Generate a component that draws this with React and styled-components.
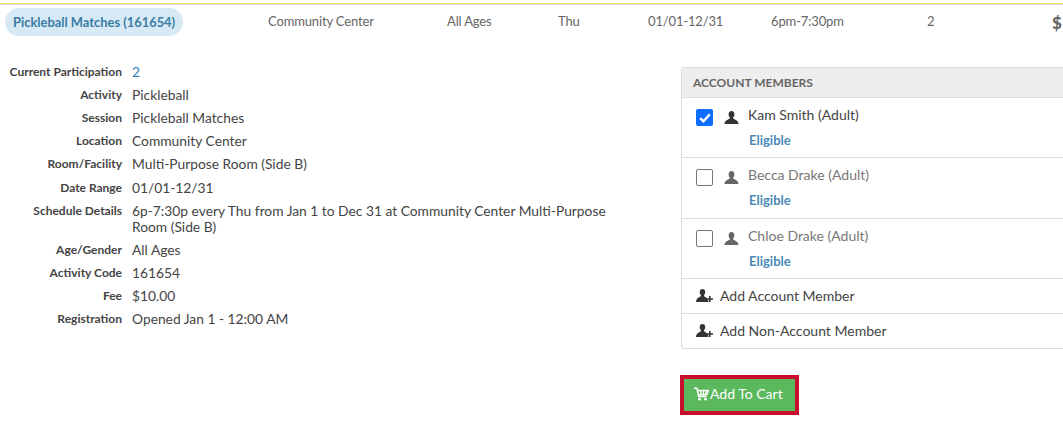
import React from "react";
import styled, { createGlobalStyle } from "styled-components";

const GlobalStyle = createGlobalStyle`
  html, body {
    margin: 0;
    padding: 0;
    background: #fff;
    overflow: hidden;
  }
  body {
    font-family: Lato, "Liberation Sans", sans-serif;
    color: #444;
  }
`;

const Page = styled.div`
  width: 1063px;
  height: 444px;
  overflow: hidden;
  padding-top: 3px;
  box-sizing: border-box;
`;

const TopRule = styled.div`
  height: 1px;
  background: #f5e26b;
  border-bottom: 1px solid #d9d9d9;
`;

// Summary row of the activity
const SummaryRow = styled.div`
  display: grid;
  grid-template-columns: 263px 179px 111px 90px 123px 156px 125px 1fr;
  align-items: center;
  height: 28px;
  margin-top: 3px;
  padding-left: 5px;
  font-size: 13px;
  letter-spacing: -0.15px;
  color: #666;
  white-space: nowrap;
`;

const Cell = styled.span`
  padding-bottom: 2px;
`;

const Pill = styled.span`
  justify-self: start;
  padding: 0 8px;
  height: 28px;
  line-height: 28px;
  border-radius: 14px;
  background: #d6e9f4;
  color: #3a7ca5;
  font-weight: 700;
  font-size: 12.9px;
  letter-spacing: 0;
`;

const Money = styled.span`
  font-weight: 900;
  font-size: 17px;
  color: #666;
`;

const Content = styled.div`
  display: flex;
  margin-top: 27px;
`;

const Details = styled.dl`
  width: 681px;
  flex: none;
  margin: 0;
  padding-top: 0.6px;
  display: grid;
  grid-template-columns: 122px 490px;
  column-gap: 10px;
  row-gap: 7.2px;
  align-content: start;
`;

const Label = styled.dt`
  text-align: right;
  font-size: 12px;
  font-weight: 700;
  line-height: 15px;
  color: #444;
`;

const Value = styled.dd`
  margin: 0;
  font-size: 13.8px;
  line-height: 16px;
  color: ${(p) => (p.$accent ? "#2f7fb0" : "#444")};
`;

const Side = styled.div`
  flex: none;
  width: 400px;
  padding-top: 4px;
`;

const Panel = styled.div`
  border: 1px solid #ddd;
  border-radius: 3px;
`;

const PanelHead = styled.div`
  height: 29px;
  line-height: 30px;
  padding-left: 11px;
  background: #eee;
  border-bottom: 1px solid #ddd;
  font-size: 12px;
  font-weight: 700;
  color: #666;
`;

const Member = styled.label`
  display: grid;
  grid-template-columns: 17px 17px 1fr;
  column-gap: 9px;
  grid-template-rows: 24px 24px;
  height: 60px;
  box-sizing: border-box;
  padding: 7px 0 0 14px;
  border-bottom: 1px solid #ddd;
  color: ${(p) => (p.$active ? "#444" : "#777")};
  font-size: 14px;
  &:nth-of-type(2) {
    height: 61px;
  }
`;

const Check = styled.span`
  width: 17px;
  height: 17px;
  margin-top: 4px;
  box-sizing: border-box;
  border-radius: 2px;
  display: flex;
  align-items: center;
  justify-content: center;
  background: ${(p) => (p.$checked ? "#0d6efd" : "#fff")};
  border: ${(p) => (p.$checked ? "none" : "1px solid #777")};
`;

const PersonSlot = styled.span`
  display: flex;
  margin: 5px 0 0 2px;
  color: ${(p) => (p.$active ? "#333" : "#666")};
`;

const MemberName = styled.span`
  line-height: 20px;
`;

const Eligible = styled.span`
  grid-column: 3;
  padding-left: 1px;
  font-size: 13px;
  font-weight: 700;
  line-height: 22px;
  color: #4a8ab5;
`;

const AddRow = styled.div`
  display: flex;
  align-items: center;
  gap: 7px;
  height: 34px;
  box-sizing: border-box;
  padding: 0 0 1px 14px;
  font-size: 14px;
  color: #444;
  & + & {
    border-top: 1px solid #ddd;
    height: 35px;
  }
`;

const CartButton = styled.button`
  display: flex;
  align-items: center;
  gap: 1px;
  margin: 26px 0 0 -1px;
  width: 119px;
  height: 40px;
  padding: 0 0 3px 10px;
  box-sizing: border-box;
  border: 4px solid #c8102e;
  background: #5cb85c;
  color: #fff;
  font-family: inherit;
  font-size: 14px;
`;

const PersonIcon = () => (
  <svg width="15" height="15" viewBox="0 0 15 15" fill="currentColor">
    <path d="M7.500 1C5.700 1 4.600 2.400 4.600 4.200c0 1.300.5 2.500 1.300 3.300v1.100C4.300 9.600 1 10.200.4 14h14.200c-.6-3.800-3.900-4.400-5.500-5.400V7.500c.8-.8 1.300-2 1.300-3.300C10.400 2.400 9.300 1 7.500 1z" />
  </svg>
);

const AddPersonIcon = () => (
  <svg width="17" height="15" viewBox="0 0 17 15" fill="#333">
    <path d="M6.500 1C4.800 1 3.700 2.300 3.700 4c0 1.300.5 2.400 1.200 3.200v1.100C3.400 9.300.3 9.900 0 14h12.500c-.2-3.900-3.200-4.700-4.500-5.700V7.200c.7-.8 1.200-1.900 1.200-3.200C9.200 2.300 8.200 1 6.500 1z" />
    <path d="M13 8h1.600v2.200H17v1.500h-2.400V14H13v-2.300h-2.400v-1.500H13z" />
  </svg>
);

const CartIcon = () => (
  <svg width="15" height="14" viewBox="0 0 15 14" fill="none" stroke="#fff" strokeWidth="1.500">
    <path d="M0 1.200h2.800l1.900 8.300h7.800" />
    <path d="M3.300 3.400h11l-1.500 4.300H4.300" />
    <path d="M6.600 3.400 7.200 7.700M9.400 3.400v4.300M12.200 3.400 11.500 7.700" strokeWidth="1.300" />
    <circle cx="5.500" cy="12.200" r="1.400" fill="#fff" stroke="none" />
    <circle cx="11.500" cy="12.200" r="1.400" fill="#fff" stroke="none" />
  </svg>
);

const details = [
  ["Activity", "Pickleball"],
  ["Session", "Pickleball Matches"],
  ["Location", "Community Center"],
  ["Room/Facility", "Multi-Purpose Room (Side B)"],
  ["Date Range", "01/01-12/31"],
  [
    "Schedule Details",
    "6p-7:30p every Thu from Jan 1 to Dec 31 at Community Center Multi-Purpose Room (Side B)",
  ],
  ["Age/Gender", "All Ages"],
  ["Activity Code", "161654"],
  ["Fee", "$10.00"],
  ["Registration", "Opened Jan 1 - 12:00 AM"],
];

const members = [
  { name: "Kam Smith (Adult)", checked: true },
  { name: "Becca Drake (Adult)", checked: false },
  { name: "Chloe Drake (Adult)", checked: false },
];

const App = () => {
  return (
    <Page>
      <GlobalStyle />
      <TopRule />
      <SummaryRow>
        <Pill>Pickleball Matches (161654)</Pill>
        <Cell>Community Center</Cell>
        <Cell>All Ages</Cell>
        <Cell>Thu</Cell>
        <Cell>01/01-12/31</Cell>
        <Cell>6pm-7:30pm</Cell>
        <Cell>2</Cell>
        <Money>$</Money>
      </SummaryRow>
      <Content>
        <Details>
          <Label>Current Participation</Label>
          <Value $accent>2</Value>
          {details.map(([label, value]) => (
            <React.Fragment key={label}>
              <Label>{label}</Label>
              <Value>{value}</Value>
            </React.Fragment>
          ))}
        </Details>
        <Side>
          <Panel>
            <PanelHead>ACCOUNT MEMBERS</PanelHead>
            {members.map((m) => (
              <Member key={m.name} $active={m.checked}>
                <Check $checked={m.checked}>
                  {m.checked && (
                    <svg width="12" height="10" viewBox="0 0 12 10" fill="none" stroke="#fff" strokeWidth="2.400">
                      <path d="M1.200 5.200 4.500 8.300 10.800 1.300" />
                    </svg>
                  )}
                </Check>
                <PersonSlot $active={m.checked}>
                  <PersonIcon />
                </PersonSlot>
                <MemberName>{m.name}</MemberName>
                <Eligible>Eligible</Eligible>
              </Member>
            ))}
            <AddRow>
              <AddPersonIcon />
              Add Account Member
            </AddRow>
            <AddRow>
              <AddPersonIcon />
              Add Non-Account Member
            </AddRow>
          </Panel>
          <CartButton>
            <CartIcon />
            Add To Cart
          </CartButton>
        </Side>
      </Content>
    </Page>
  );
};

export default App;
